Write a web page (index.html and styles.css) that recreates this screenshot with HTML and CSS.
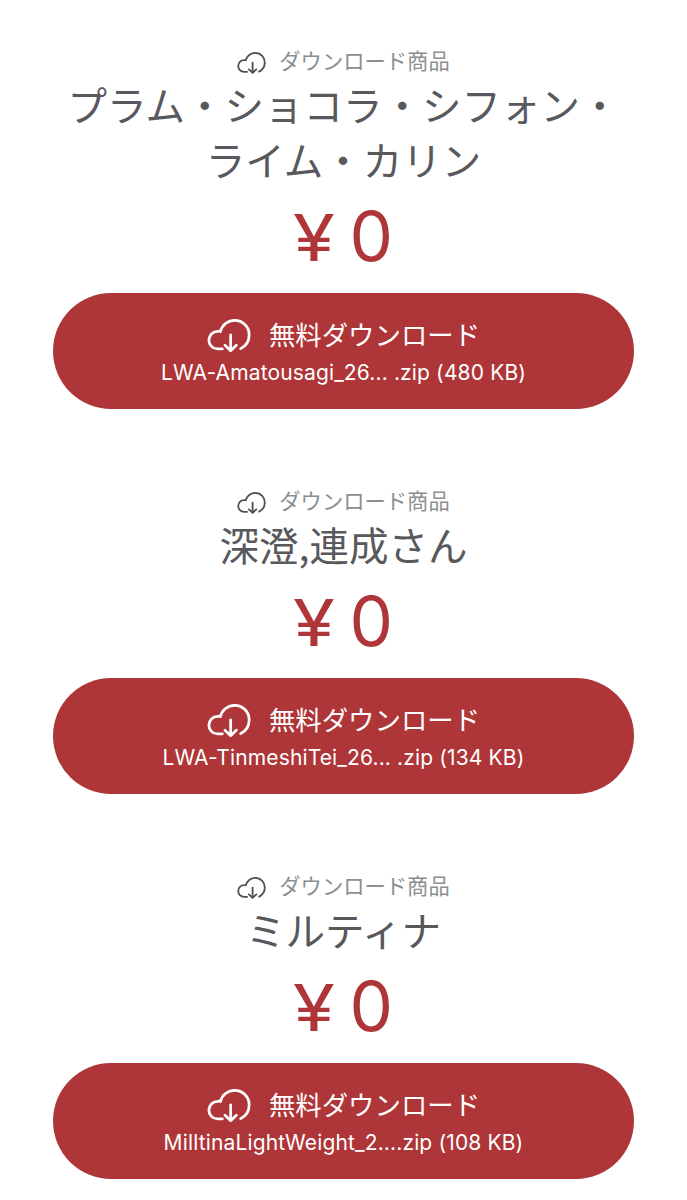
FILE: index.html
```html
<!DOCTYPE html>
<html lang="ja">
<head>
<meta charset="utf-8">
<title>ダウンロード商品</title>
<link rel="stylesheet" href="styles.css">
</head>
<body>
<svg class="defs" aria-hidden="true">
  <symbol id="cloud" viewBox="50 41 132 100">
    <path d="M96 131H82A26.5 26.5 0 0 1 82 78Q87 77 90 79A44 44 0 0 1 133 45A43.5 43.5 0 0 1 176.500 88.500A46 46 0 0 1 151 130M121 89V136M104 120L121 136L138 120"/>
  </symbol>
</svg>
<main class="list">
  <section class="item">
    <div class="kind"><svg class="kind-icon"><use href="#cloud"/></svg><span>ダウンロード商品</span></div>
    <h2 class="name">プラム・ショコラ・シフォン・<br>ライム・カリン</h2>
    <div class="price"><span class="yen">¥</span><span class="amount">0</span></div>
    <a class="button">
      <span class="action"><svg class="action-icon"><use href="#cloud"/></svg><span>無料ダウンロード</span></span>
      <span class="file">LWA-Amatousagi_26... .zip (480 KB)</span>
    </a>
  </section>
  <section class="item">
    <div class="kind"><svg class="kind-icon"><use href="#cloud"/></svg><span>ダウンロード商品</span></div>
    <h2 class="name">深澄,連成さん</h2>
    <div class="price"><span class="yen">¥</span><span class="amount">0</span></div>
    <a class="button">
      <span class="action"><svg class="action-icon"><use href="#cloud"/></svg><span>無料ダウンロード</span></span>
      <span class="file">LWA-TinmeshiTei_26... .zip (134 KB)</span>
    </a>
  </section>
  <section class="item">
    <div class="kind"><svg class="kind-icon"><use href="#cloud"/></svg><span>ダウンロード商品</span></div>
    <h2 class="name">ミルティナ</h2>
    <div class="price"><span class="yen">¥</span><span class="amount">0</span></div>
    <a class="button">
      <span class="action"><svg class="action-icon"><use href="#cloud"/></svg><span>無料ダウンロード</span></span>
      <span class="file">MilltinaLightWeight_2....zip (108 KB)</span>
    </a>
  </section>
</main>
</body>
</html>
```
FILE: styles.css
```css
* { box-sizing: border-box; }
body {
  margin: 0;
  background: #fff;
  color: #58585d;
  font-family: "Noto Sans CJK JP", sans-serif;
  overflow: hidden;
}
.defs { display: none; }
symbol path {
  fill: none;
  stroke: currentColor;
  stroke-width: 8.3;
  stroke-linecap: round;
  stroke-linejoin: round;
}
.list {
  display: flex;
  flex-direction: column;
  gap: 75px;
  padding: 44px 53px 0;
}
.item { display: flex; flex-direction: column; }
.kind {
  display: flex;
  align-items: center;
  justify-content: center;
  gap: 13px;
  height: 32px;
  font-size: 21.3px;
  line-height: 32px;
  color: #8e8e90;
}
.kind-icon { width: 29px; height: 22px; margin-top: 5px; color: #505054; }
.name {
  margin: 0 -20px;
  font-size: 39.5px;
  line-height: 55px;
  font-weight: 400;
  text-align: center;
  white-space: nowrap;
}
.price {
  display: flex;
  justify-content: center;
  align-items: baseline;
  gap: 18px;
  height: 107px;
  padding-left: 2px;
  font-family: Inter, sans-serif;
  font-weight: 380;
  line-height: 101px;
  color: #ae3538;
}
.yen { font-size: 65px; transform: scaleX(1.17); }
.amount { font-size: 69px; }
.button {
  display: flex;
  flex-direction: column;
  align-items: center;
  height: 116px;
  padding-top: 21px;
  border-radius: 58px;
  background: #ae3538;
  color: #fff;
}
.action {
  display: flex;
  align-items: center;
  gap: 18px;
  height: 40px;
  font-size: 26.4px;
  line-height: 40px;
}
.action-icon { width: 44px; height: 33.3px; margin-top: 3px; }
.file {
  margin-top: 3px;
  font-family: Inter, sans-serif;
  font-size: 21px;
  font-weight: 380;
  letter-spacing: 0.14px;
  line-height: 32px;
  white-space: nowrap;
}
```
